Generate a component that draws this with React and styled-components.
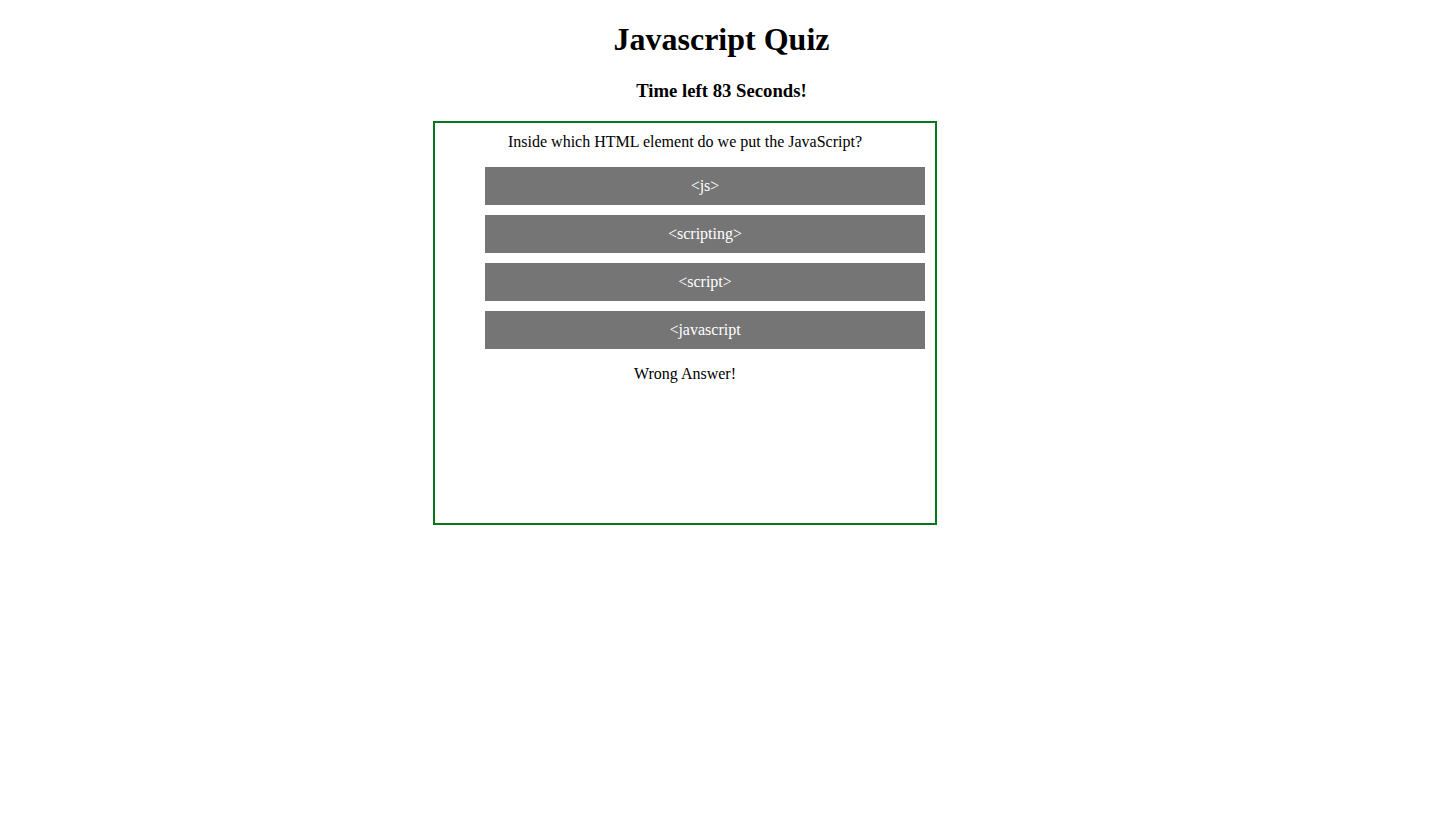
import React from "react";
import styled, { createGlobalStyle } from "styled-components";

const GlobalStyle = createGlobalStyle`
  body {
    margin: 8px;
    background: #ffffff;
    color: #000000;
    font-family: "Liberation Serif", "Times New Roman", serif;
    font-size: 16px;
  }
`;

const Page = styled.div`
  text-align: center;
`;

const Title = styled.h1`
  font-size: 32px;
  font-weight: bold;
  margin: 13.44px 0 21.44px;
`;

const Timer = styled.h3`
  font-size: 18.72px;
  font-weight: bold;
  margin: 18.72px 0 19px;
`;

const QuizBox = styled.div`
  width: 504px;
  height: 404px;
  margin-left: 425px;
  padding: 10px;
  box-sizing: border-box;
  border: 2px solid #08761c;
  text-align: center;
`;

const Question = styled.div`
  line-height: 18px;
`;

const AnswerList = styled.ul`
  list-style: none;
  margin: 16px 0;
  padding: 0 0 0 40px;
  display: flex;
  flex-direction: column;
  gap: 10px;
`;

const AnswerButton = styled.button`
  display: block;
  width: 100%;
  height: 38px;
  border: none;
  background: #757575;
  color: #ffffff;
  font-family: "Liberation Serif", "Times New Roman", serif;
  font-size: 16px;
  cursor: pointer;
`;

const Feedback = styled.div`
  line-height: 18px;
`;

const answers = ["<js>", "<scripting>", "<script>", "<javascript"];

export default function App() {
  return (
    <Page>
      <GlobalStyle />
      <Title>Javascript Quiz</Title>
      <Timer>Time left 83 Seconds!</Timer>
      <QuizBox>
        <Question>Inside which HTML element do we put the JavaScript?</Question>
        <AnswerList>
          {answers.map((a) => (
            <li key={a}>
              <AnswerButton>{a}</AnswerButton>
            </li>
          ))}
        </AnswerList>
        <Feedback>Wrong Answer!</Feedback>
      </QuizBox>
    </Page>
  );
}
